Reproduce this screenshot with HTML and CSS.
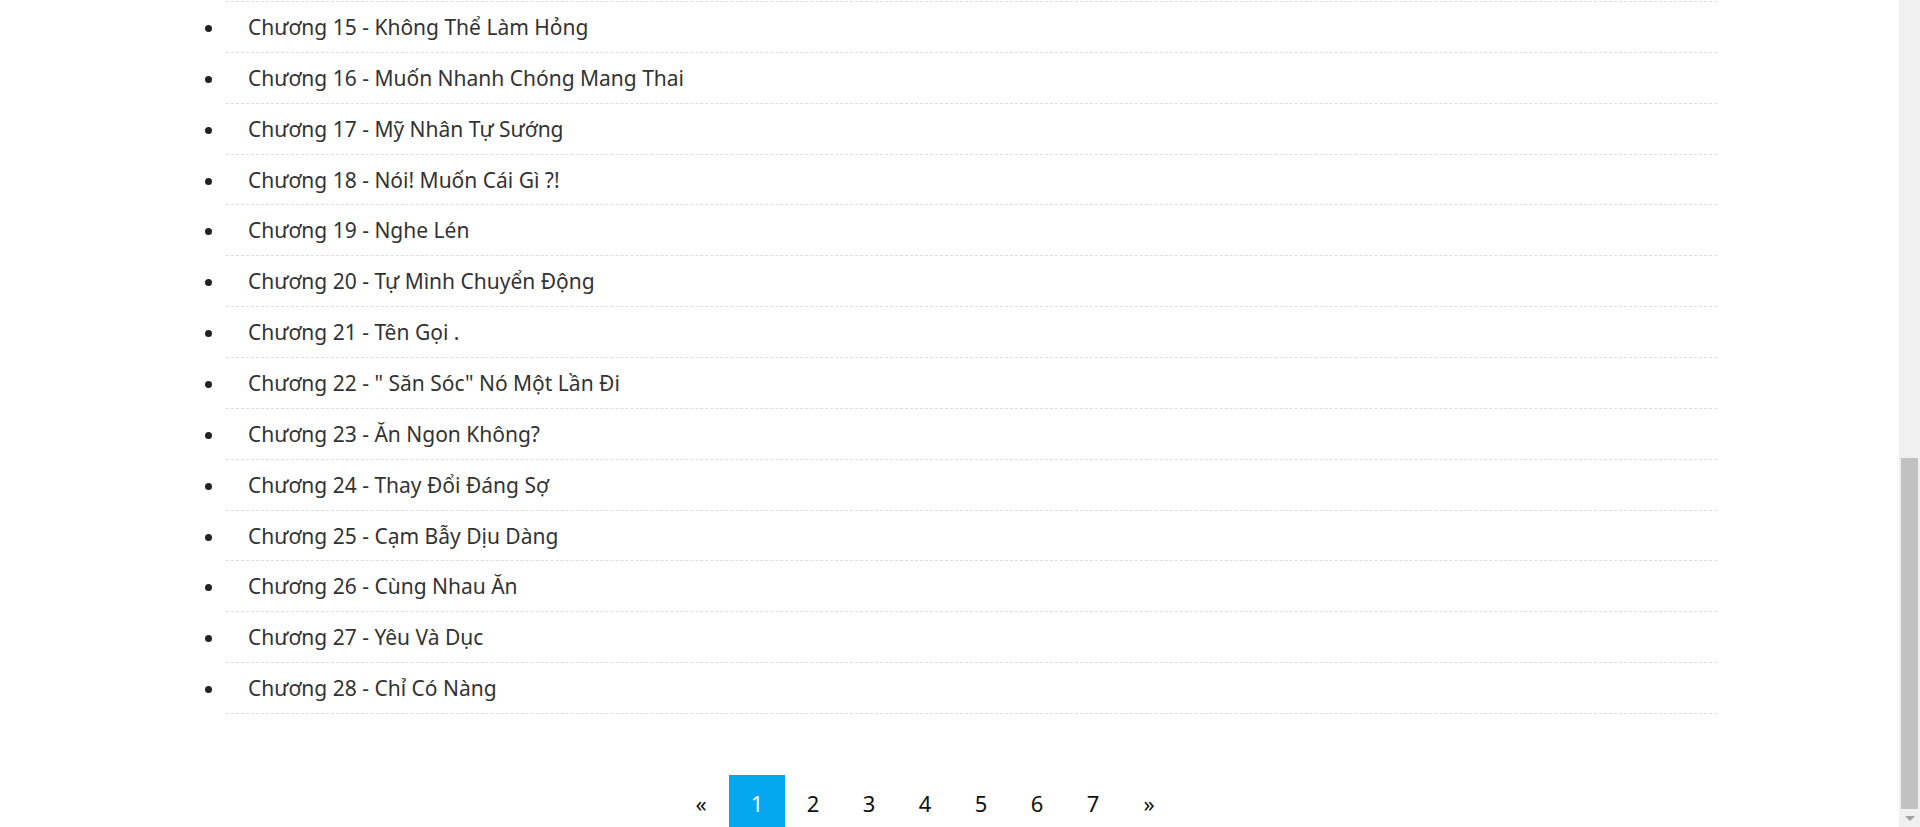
FILE: index.html
```html
<!DOCTYPE html>
<html lang="vi">
<head>
<meta charset="utf-8">
<title>Danh sách chương</title>
<link rel="stylesheet" href="styles.css">
</head>
<body>
<div class="page">
  <main class="main">
    <div class="container">
      <ul class="chapters">
        <li><a href="#">Chương 15 - Không Thể Làm Hỏng</a></li>
        <li><a href="#">Chương 16 - Muốn Nhanh Chóng Mang Thai</a></li>
        <li><a href="#">Chương 17 - Mỹ Nhân Tự Sướng</a></li>
        <li><a href="#">Chương 18 - Nói! Muốn Cái Gì ?!</a></li>
        <li><a href="#">Chương 19 - Nghe Lén</a></li>
        <li><a href="#">Chương 20 - Tự Mình Chuyển Động</a></li>
        <li><a href="#">Chương 21 - Tên Gọi .</a></li>
        <li><a href="#">Chương 22 - " Săn Sóc" Nó Một Lần Đi</a></li>
        <li><a href="#">Chương 23 - Ăn Ngon Không?</a></li>
        <li><a href="#">Chương 24 - Thay Đổi Đáng Sợ</a></li>
        <li><a href="#">Chương 25 - Cạm Bẫy Dịu Dàng</a></li>
        <li><a href="#">Chương 26 - Cùng Nhau Ăn</a></li>
        <li><a href="#">Chương 27 - Yêu Và Dục</a></li>
        <li><a href="#">Chương 28 - Chỉ Có Nàng</a></li>
      </ul>
      <nav class="pagination">
        <a href="#" class="pg">«</a>
        <a href="#" class="pg active">1</a>
        <a href="#" class="pg">2</a>
        <a href="#" class="pg">3</a>
        <a href="#" class="pg">4</a>
        <a href="#" class="pg">5</a>
        <a href="#" class="pg">6</a>
        <a href="#" class="pg">7</a>
        <a href="#" class="pg">»</a>
      </nav>
    </div>
  </main>
  <div class="scrollbar">
    <div class="scroll-track">
      <div class="scroll-thumb"></div>
    </div>
    <div class="scroll-arrow"></div>
  </div>
</div>
</body>
</html>
```

FILE: styles.css
```css
html, body {
  margin: 0;
  padding: 0;
  height: 100%;
  overflow: hidden;
}

body {
  background: #ffffff;
  font-family: "Noto Sans", "Open Sans", sans-serif;
  color: #333333;
}

.page {
  display: flex;
  height: 827px;
}

.main {
  flex: 1;
  overflow: hidden;
}

.container {
  margin-left: 186px;
  width: 1531px;
}

.chapters {
  margin: 0;
  padding: 1px 0 0 40px;
  list-style: disc;
}

.chapters li {
  font-size: 21px;
  line-height: 48.86px;
  padding: 1px 0 0 22px;
  border-bottom: 1px dashed #dddddd;
}

.chapters li:first-child {
  border-top: 1px dashed #dddddd;
}

.chapters li::marker {
  color: #222222;
}

.chapters a {
  color: #333333;
  text-decoration: none;
}

.pagination {
  display: flex;
  margin-top: 61px;
  padding-left: 487px;
}

.pg {
  width: 56px;
  height: 56px;
  display: flex;
  align-items: center;
  justify-content: center;
  font-size: 22px;
  color: #111111;
  text-decoration: none;
}

.pg.active {
  background: #03a6ef;
  color: #ffffff;
}

.scrollbar {
  width: 21px;
  background: #f0f0f0;
  display: flex;
  flex-direction: column;
}

.scroll-track {
  flex: 1;
  display: flex;
  flex-direction: column;
  justify-content: flex-end;
  padding: 0 2px;
}

.scroll-thumb {
  height: 351px;
  background: #c1c1c1;
}

.scroll-arrow {
  height: 18px;
  display: flex;
  justify-content: center;
  align-items: center;
}

.scroll-arrow::before {
  content: "";
  width: 0;
  height: 0;
  border-left: 5px solid transparent;
  border-right: 5px solid transparent;
  border-top: 5px solid #a3a3a3;
}
```
